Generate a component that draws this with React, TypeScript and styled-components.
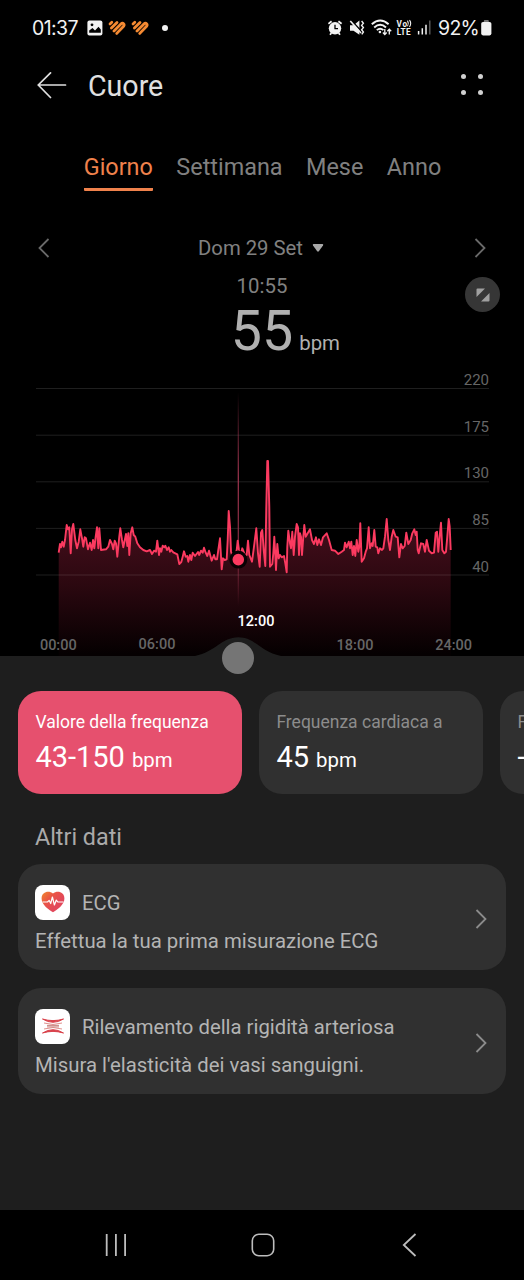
import React from 'react'
import styled, { createGlobalStyle } from 'styled-components'

// heart rate samples, three units per pixel
const SAMPLES = `86,338 90,312 93,322 97,305 101,320 105,300 110,255 114,268 118,262 122,340 126,268 130,252 136,300 141,325 146,305 151,268
157,300 160,320 164,292 168,295 174,328 180,308 185,330 189,300 193,325 197,290 201,262 205,325 208,265 213,330 228,328 235,320 240,300
246,312 250,328 254,302 258,310 262,350 268,290 271,265 276,300 280,322 288,282 292,318 295,280 298,345 302,280 307,262 311,285 316,290
322,310 330,322 340,330 350,334 360,330 366,342 372,332 378,335 382,302 387,345 390,325 394,335 398,317 403,322 406,317 411,330 416,322
420,335 424,330 430,337 442,343 448,372 454,366 458,350 462,334 467,350 472,348 475,365 480,345 484,360 488,338 495,348 504,336 508,345
513,332 518,338 522,323 527,338 532,348 537,332 545,362 552,345 556,358 561,358 565,330 570,295 575,388 579,355 584,360 590,358 593,300
596,213 600,260 603,335 608,350 616,345 620,330 623,302 627,330 632,345 637,325 645,345 650,345 654,302 658,345 666,365 672,320 679,265
684,340 689,380 693,278 697,270 701,330 706,378 709,200 712,63 714,63 718,200 720,380 727,372 730,340 733,290 736,345 738,390 742,312
746,355 750,345 755,352 762,348 766,370 770,397 772,320 775,272 780,310 783,325 787,275 791,345 795,290 800,252 804,262 807,345 810,280
813,290 816,345 820,290 823,255 827,290 833,280 840,268 846,300 852,312 858,292 862,315 867,298 873,315 879,292 890,280 897,300 905,330
915,332 925,342 935,335 942,330 945,308 950,322 956,305 960,325 964,305 968,345 972,318 976,348 980,300 985,335 988,320 991,250 995,365
1002,355 1007,335 1011,325 1016,262 1020,325 1025,310 1028,318 1033,270 1037,320 1042,322 1045,340 1050,325 1056,330 1060,325 1065,290
1070,237 1075,300 1080,330 1085,290 1090,270 1097,290 1103,292 1108,352 1113,312 1118,325 1124,318 1129,278 1135,312 1142,300 1147,280
1153,268 1157,285 1160,275 1163,330 1166,340 1173,310 1180,312 1185,335 1190,300 1197,332 1205,340 1212,338 1217,278 1221,275 1225,335
1228,300 1233,248 1237,330 1243,340 1248,335 1252,290 1256,237 1259,260 1262,330`

const LINE = SAMPLES.split( /\s+/ ).map( pair => {
  const [ x, y ] = pair.split( ',' ).map( Number )
  return `${( 30 + x / 3 ).toFixed( 1 )},${( 72 + y / 3 ).toFixed( 1 )}`
} ).join( ' ' )

const LEVELS = [
  { label: '220', y: 20.5 },
  { label: '175', y: 67.2 },
  { label: '130', y: 113.8 },
  { label: '85', y: 160.4 },
  { label: '40', y: 207 }
]

const HOURS = [
  { label: '00:00', x: 58.3, y: 282 },
  { label: '06:00', x: 157, y: 281 },
  { label: '12:00', x: 256, y: 257.7, active: true },
  { label: '18:00', x: 355, y: 282 },
  { label: '24:00', x: 453.7, y: 282 }
]

const TABS = [ 'Giorno', 'Settimana', 'Mese', 'Anno' ]

const HeartLogo = () => (
  <svg width='18' height='16' viewBox='0 0 18 16' fill='none' stroke='#f58a32' strokeWidth='2.8' strokeLinecap='round'>
    <path d='M2 3.9 L3.8 2.2' />
    <path d='M3.4 8 L9 2.5' />
    <path d='M6 10.9 L13.2 3.7 C14.8 2.2 17 4.6 15.6 6.3 L8.8 13.4' strokeLinejoin='round' />
  </svg>
)

const Chevron = ( { left, color }: { left?: boolean, color: string } ) => (
  <svg width='12' height='20' viewBox='0 0 12 20' fill='none' stroke={color} strokeWidth='1.8'>
    <path d={left ? 'M10.5 1 L1.5 10 L10.5 19' : 'M1.5 1 L10.5 10 L1.5 19'} />
  </svg>
)

const StatusIcons = () => (
  <svg width='104' height='20' viewBox='328 18 104 20' fill='none' stroke='#f2f2f2'>
    <circle cx='335' cy='28.3' r='6.2' fill='#f2f2f2' stroke='none' />
    <path d='M335 24.8 V28.7 H338' stroke='#000' strokeWidth='1.3' />
    <path d='M328.4 23.8 L331.6 21.2 M341.6 23.8 L338.4 21.2' strokeWidth='1.8' />
    <path d='M331.4 33 L330 34.8 M338.6 33 L340 34.8' strokeWidth='1.8' />
    <path d='M350 25.3 H353.5 L359.4 20.6 V34.8 L353.5 30.8 H350 Z' fill='#f2f2f2' stroke='none' />
    <path d='M351.5 20.5 L362 32' stroke='#000' strokeWidth='1.6' />
    <path d='M350.3 21 L361 33' strokeWidth='1.6' />
    <path d='M361.6 21 L363.4 23.2 L361.6 25.4 L363.4 27.6 L361.6 29.8 L363.4 32 L361.8 34.4' strokeWidth='1.4' />
    <path d='M371.8 24.2 Q380.2 16.8 388.6 24.2' strokeWidth='2' />
    <path d='M374.2 27.5 Q380.2 22.2 386 27.5' strokeWidth='1.9' />
    <path d='M376.8 30.2 Q380.2 27.2 383.4 30.2' strokeWidth='1.8' />
    <circle cx='379.9' cy='32' r='1.3' fill='#f2f2f2' stroke='none' />
    <path d='M384.8 29 V34.4 M382.9 32.5 L384.8 34.6 L386.7 32.5 M389.3 34.6 V29.2 M387.4 31.2 L389.3 29.1 L391.2 31.2' strokeWidth='1.3' />
    <NetworkLabel x='396.5' y='26.6' textLength='10.5'>Vo</NetworkLabel>
    <NetworkLabel x='396.7' y='35.4' textLength='14'>LTE</NetworkLabel>
    <path d='M407.5 20.6 Q409.2 23.4 407.5 26.2 M409.5 20.2 Q411.9 23.4 409.5 27' strokeWidth='1.1' />
    <path d='M418.6 31 V34.6 M422.3 28.2 V34.6 M426 24.7 V34.6' strokeWidth='1.5' />
    <path d='M429.8 20.6 V34.6' stroke='#666' strokeWidth='1.3' />
  </svg>
)

const HeartChart = () => (
  <Chart viewBox='0 0 524 288'>
    <defs>
      <linearGradient id='area' gradientUnits='userSpaceOnUse' x1='0' y1='145' x2='0' y2='286'>
        <stop offset='0' stopColor='#480f1e' />
        <stop offset='0.5' stopColor='#2c0810' />
        <stop offset='1' stopColor='#050001' />
      </linearGradient>
      <linearGradient id='cursor' gradientUnits='userSpaceOnUse' x1='0' y1='24' x2='0' y2='238'>
        <stop offset='0' stopColor='#a03550' stopOpacity='0' />
        <stop offset='0.4' stopColor='#a03550' />
        <stop offset='0.75' stopColor='#a03550' stopOpacity='0.8' />
        <stop offset='1' stopColor='#a03550' stopOpacity='0' />
      </linearGradient>
    </defs>
    <polygon points={`58.7,288 ${LINE} 450.7,288`} fill='url(#area)' />
    {LEVELS.map( level => (
      <g key={level.label}>
        <line x1='36' x2='489' y1={level.y} y2={level.y} stroke='#fff' strokeOpacity='0.12' />
        <LevelLabel x='489' y={level.y - 3.5}>{level.label}</LevelLabel>
      </g>
    ) )}
    <rect x='237.7' y='24' width='1.2' height='214' fill='url(#cursor)' />
    <polyline points={LINE} fill='none' stroke='#fb3a60' strokeWidth='1.9' strokeLinejoin='round' />
    <circle cx='238.3' cy='191.6' r='7.4' fill='#fb3a60' stroke='#070103' strokeWidth='3.2' />
    <path d='M184 289 C214 289 219 269.3 238.3 269.3 C257.6 269.3 262 289 292 289 Z' fill='#1e1e1e' />
    {HOURS.map( hour => (
      <HourLabel key={hour.label} x={hour.x} y={hour.y} $active={hour.active}>{hour.label}</HourLabel>
    ) )}
  </Chart>
)

const App = () => (
  <Screen>
    <GlobalStyle />
    <StatusBar>
      <Clock>01:37</Clock>
      <svg width='16' height='16' viewBox='0 0 16 16'>
        <rect x='0.4' y='0.4' width='15' height='15' rx='2' fill='#f2f2f2' />
        <path d='M2.2 12.8 V10.5 L5.5 8 L8 10.5 L11.5 6.8 L13.8 9.5 V12.8 Z' fill='#000' />
        <circle cx='5' cy='4.8' r='1.4' fill='#000' />
      </svg>
      <HeartLogo />
      <HeartLogo />
      <Dot />
      <Indicators>
        <StatusIcons />
        <Percent>92%</Percent>
        <svg width='11' height='16' viewBox='0 0 11 16'>
          <rect x='2.8' y='0' width='5' height='3' rx='1' fill='#777' />
          <rect x='0.2' y='2' width='10.2' height='13.4' rx='1.8' fill='#f2f2f2' />
        </svg>
      </Indicators>
    </StatusBar>
    <Header>
      <svg width='30' height='28' viewBox='0 0 30 28' fill='none' stroke='#e0e0e0' strokeWidth='1.7' strokeLinecap='round'>
        <path d='M28.5 13 H1.5 M13.5 0.9 L1.3 13 L13.5 25.5' />
      </svg>
      <Title>Cuore</Title>
      <MenuDots>
        <i /><i /><i /><i />
      </MenuDots>
    </Header>
    <Tabs>
      {TABS.map( ( tab, index ) => <Tab key={tab} $active={index === 0}>{tab}</Tab> )}
    </Tabs>
    <DateRow>
      <Chevron left color='#6a6a6a' />
      <DateLabel>
        Dom 29 Set
        <svg width='12' height='9' viewBox='0 0 12 9'>
          <path d='M1.5 0 H10.5 Q11.8 0.2 11 1.5 L7 7.1 Q6 8.3 5 7.1 L1 1.5 Q0.2 0.2 1.5 0 Z' fill='#a8a8a8' />
        </svg>
      </DateLabel>
      <Chevron color='#6a6a6a' />
    </DateRow>
    <Reading>
      <Time>10:55</Time>
      <Current>
        <strong>55</strong>
        <small>bpm</small>
      </Current>
      <Expand>
        <svg width='14' height='14' viewBox='0 0 14 14' fill='#a0a0a0'>
          <path d='M1.5 0.5 H9 L0.5 9 V1.5 Q0.5 0.5 1.5 0.5 Z M13.5 5 V12.5 Q13.5 13.5 12.5 13.5 H5 Z' />
        </svg>
      </Expand>
    </Reading>
    <HeartChart />
    <Panel>
      <Handle />
      <Cards>
        <Card $active>
          <CardLabel $active>Valore della frequenza</CardLabel>
          <CardValue>43-150<small>bpm</small></CardValue>
        </Card>
        <Card>
          <CardLabel>Frequenza cardiaca a</CardLabel>
          <CardValue>45<small>bpm</small></CardValue>
        </Card>
        <Card>
          <CardLabel>F</CardLabel>
          <CardValue>--</CardValue>
        </Card>
      </Cards>
      <SectionTitle>Altri dati</SectionTitle>
      <Item>
        <div>
          <ItemHead>
            <IconTile>
              <svg width='24' height='22' viewBox='0 0 24 22'>
                <defs>
                  <linearGradient id='heart' x1='0' y1='0' x2='0.7' y2='0.6'>
                    <stop offset='0' stopColor='#f0892e' />
                    <stop offset='0.5' stopColor='#ea5545' />
                    <stop offset='1' stopColor='#e2485a' />
                  </linearGradient>
                </defs>
                <path d='M12 21.2 C8 18.6 0.6 14 0.6 7.4 C0.6 0.6 8 -0.8 12 2.5 C16 -0.8 23.4 0.6 23.4 7.4 C23.4 14 16 18.6 12 21.2 Z' fill='url(#heart)' />
                <path d='M1.5 11 H6.5 L8.2 9.4 L9.7 12.5 L11.4 6 L13.4 14 L15.3 9 L16.8 11 H22.5' fill='none' stroke='#fff' strokeWidth='1.2' strokeLinejoin='round' />
              </svg>
            </IconTile>
            <ItemName>ECG</ItemName>
          </ItemHead>
          <ItemText>Effettua la tua prima misurazione ECG</ItemText>
        </div>
        <Chevron color='#8c8c8c' />
      </Item>
      <Item>
        <div>
          <ItemHead>
            <IconTile>
              <svg width='24' height='18' viewBox='0 0 24 18' fill='none'>
                <path d='M1.5 2 Q12 8.6 22.5 2 Q12 5.2 1.5 2 Z M1.5 16 Q12 9.4 22.5 16 Q12 12.8 1.5 16 Z' fill='#d9434c' stroke='#d9434c' strokeWidth='1' />
                <path d='M3 6 Q12 9 21 6 M3 12 Q12 9 21 12' stroke='#e08f8c' strokeWidth='1' />
                <path d='M6 8.4 H18 M6 9.9 H18' stroke='#c98580' strokeWidth='1' />
              </svg>
            </IconTile>
            <ItemName>Rilevamento della rigidità arteriosa</ItemName>
          </ItemHead>
          <ItemText>Misura l'elasticità dei vasi sanguigni.</ItemText>
        </div>
        <Chevron color='#8c8c8c' />
      </Item>
    </Panel>
    <NavBar>
      <svg width='24' height='24' viewBox='0 0 24 24' stroke='#bdbdbd' strokeWidth='1.8'>
        <path d='M2.7 1 V23 M11.9 1 V23 M21.1 1 V23' />
      </svg>
      <svg width='24' height='24' viewBox='0 0 24 24' fill='none' stroke='#bdbdbd' strokeWidth='1.6'>
        <rect x='1.3' y='1.3' width='21.4' height='21.4' rx='6.5' />
      </svg>
      <svg width='24' height='24' viewBox='0 0 24 24' fill='none' stroke='#bdbdbd' strokeWidth='1.8'>
        <path d='M17.5 1 L5.8 12 L17.5 23' />
      </svg>
    </NavBar>
  </Screen>
)

const GlobalStyle = createGlobalStyle`
  body {
    margin: 0;
    background-color: #000;
  }
  svg { flex-shrink: 0; }
`

const Screen = styled.div`
  display: flex;
  flex-direction: column;
  width: 524px;
  height: 1280px;
  overflow: hidden;
  background-color: #000;
  font-family: Roboto, sans-serif;
  color: #e0e0e0;
`

const StatusBar = styled.div`
  display: flex;
  align-items: center;
  height: 56px;
  padding: 0 32px;
  gap: 5px;
  color: #f2f2f2;
`

const Clock = styled.span`
  width: 50px;
  font-size: 19.5px;
  font-family: Inter, sans-serif;
  letter-spacing: -0.6px;
`

const Dot = styled.span`
  width: 6px;
  height: 6px;
  margin-left: 8px;
  border-radius: 50%;
  background-color: #f2f2f2;
`

const Indicators = styled.div`
  display: flex;
  align-items: center;
  margin-left: auto;
`

const Percent = styled.span`
  width: 43px;
  margin-left: 6px;
  font-size: 19.5px;
  font-family: Inter, sans-serif;
  letter-spacing: -0.7px;
`

const NetworkLabel = styled.text`
  fill: #f2f2f2;
  stroke: none;
  font-size: 8.2px;
  font-weight: 700;
`

const Header = styled.div`
  display: flex;
  align-items: center;
  height: 60px;
  padding: 0 41px 0 37px;
`

const Title = styled.h1`
  margin: 0 auto 0 21px;
  font-size: 28.6px;
  font-weight: 400;
`

const MenuDots = styled.div`
  display: grid;
  grid-template-columns: 5px 5px;
  gap: 11px 12px;
  margin-top: -3px;
  i {
    height: 5px;
    border-radius: 50%;
    background-color: #d0d0d0;
  }
`

const Tabs = styled.div`
  display: flex;
  justify-content: center;
  gap: 23.5px;
  margin-top: 37px;
  padding-left: 1px;
`

const Tab = styled.div<{ $active?: boolean }>`
  padding-bottom: 7px;
  border-bottom: 3px solid ${( { $active } ) => $active ? '#f0824c' : 'transparent'};
  border-radius: 1px;
  color: ${( { $active } ) => $active ? '#f0824c' : '#808080'};
  font-size: 23.4px;
  line-height: 28px;
`

const DateRow = styled.div`
  display: flex;
  align-items: center;
  justify-content: space-between;
  height: 32px;
  margin-top: 41px;
  padding: 0 38px;
`

const DateLabel = styled.div`
  display: flex;
  align-items: center;
  gap: 9px;
  padding-right: 2px;
  color: #808080;
  font-size: 20.3px;
`

const Reading = styled.div`
  position: relative;
  height: 104px;
`

const Time = styled.div`
  padding-top: 10px;
  color: #808080;
  font-size: 20.4px;
  line-height: 24px;
  text-align: center;
`

const Current = styled.div`
  display: grid;
  grid-template-columns: 1fr auto 1fr;
  align-items: baseline;
  line-height: 67px;
  color: #b0b0b0;
  strong {
    grid-column: 2;
    font-size: 55.5px;
    font-weight: 400;
  }
  small {
    padding-left: 6px;
    font-size: 20.4px;
  }
`

const Expand = styled.div`
  position: absolute;
  top: 13px;
  right: 24px;
  display: grid;
  place-items: center;
  width: 35px;
  height: 35px;
  border-radius: 50%;
  background-color: #363636;
`

const Chart = styled.svg`
  display: block;
  width: 524px;
  height: 288px;
`

const LevelLabel = styled.text`
  fill: #666;
  font-size: 15px;
  text-anchor: end;
`

const HourLabel = styled.text<{ $active?: boolean }>`
  fill: ${( { $active } ) => $active ? '#fff' : '#666'};
  font-size: 14.5px;
  font-weight: 500;
  text-anchor: middle;
`

const Panel = styled.div`
  position: relative;
  flex: 1;
  padding: 35px 18px 0;
  background-color: #1e1e1e;
`

const Handle = styled.div`
  position: absolute;
  top: -14px;
  left: 222px;
  width: 32px;
  height: 32px;
  border-radius: 50%;
  background-color: #757575;
`

const Cards = styled.div`
  display: flex;
  gap: 17px;
  margin-right: -18px;
  overflow: hidden;
`

const Card = styled.div<{ $active?: boolean }>`
  flex-shrink: 0;
  box-sizing: border-box;
  width: 224px;
  height: 103px;
  padding: 20px 17px 0 17.4px;
  border-radius: 23px;
  background-color: ${( { $active } ) => $active ? '#e6506e' : '#303030'};
`

const CardLabel = styled.div<{ $active?: boolean }>`
  color: ${( { $active } ) => $active ? '#fff' : '#8c8c8c'};
  font-size: 17.5px;
  line-height: 22px;
  white-space: nowrap;
`

const CardValue = styled.div`
  margin-top: 6px;
  color: #fff;
  font-size: 29px;
  line-height: 36px;
  small {
    margin-left: 7px;
    font-size: 20.4px;
  }
`

const SectionTitle = styled.h2`
  margin: 29px 0 12px 17px;
  color: #aaa;
  font-size: 23.3px;
  font-weight: 400;
  line-height: 29px;
`

const Item = styled.div`
  display: flex;
  align-items: center;
  justify-content: space-between;
  box-sizing: border-box;
  height: 106px;
  margin-bottom: 18px;
  padding: 4px 19px 0 17px;
  border-radius: 23px;
  background-color: #303030;
  color: #b4b4b4;
`

const ItemHead = styled.div`
  display: flex;
  align-items: center;
  gap: 12px;
`

const ItemName = styled.span`
  padding-top: 2px;
  font-size: 20.3px;
`

const ItemText = styled.div`
  margin-top: 8px;
  font-size: 20.35px;
  line-height: 26px;
`

const IconTile = styled.div`
  display: grid;
  place-items: center;
  width: 35px;
  height: 35px;
  border-radius: 8px;
  background-color: #fff;
`

const NavBar = styled.div`
  display: flex;
  align-items: center;
  justify-content: space-between;
  height: 70px;
  padding: 0 102px 0 104px;
`

export default App
